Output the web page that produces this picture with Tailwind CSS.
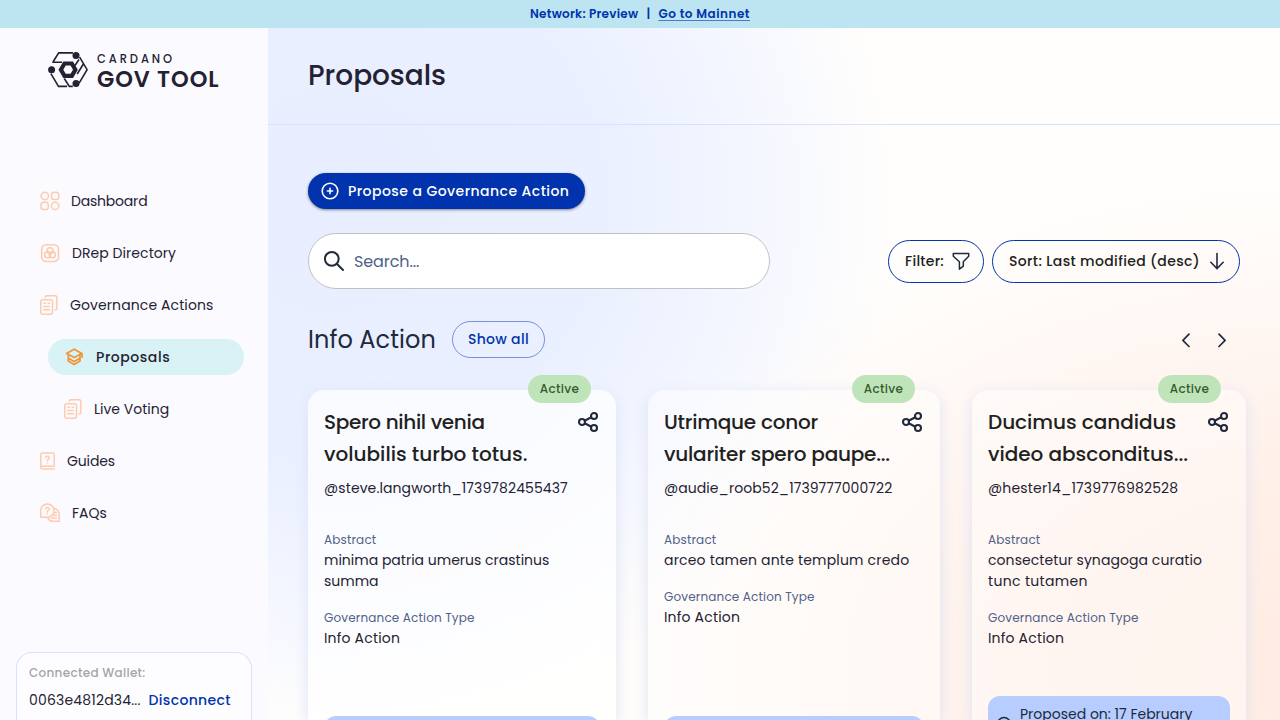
<!DOCTYPE html>
<html lang="en">
<head>
<meta charset="utf-8">
<title>Cardano GovTool - Proposals</title>
<script src="https://cdn.jsdelivr.net/npm/@tailwindcss/browser@4"></script>
</head>
<body class="h-[720px] w-[1280px] overflow-hidden bg-white font-[Poppins,Inter,sans-serif] text-sm text-[#242232]">
<svg class="hidden">
  <defs>
    <symbol id="docs" viewBox="0 0 18 20"><g fill="none" stroke="#ffcbad" stroke-width="1.5" stroke-linecap="round"><rect x=".8" y="4.7" width="11.700" height="14.5" rx="2"/><path d="M5.3 2.6V2.2Q5.3.8 6.800.8h8.400q1.600 0 1.600 1.600v11q0 1.500-1.600 1.500M3.800 8.300h1.600M8 8.300h1.600M3.800 11.500h5.800M3.800 14.800h5.800"/></g></symbol>
    <symbol id="share" viewBox="0 0 24 24"><g fill="none" stroke="#212a3d" stroke-width="2.100"><circle cx="18" cy="6" r="3"/><circle cx="6" cy="12" r="3"/><circle cx="18" cy="18" r="3"/><path d="M8.700 10.700l6.600-3.400M8.700 13.300l6.600 3.400"/></g></symbol>
    <symbol id="clock" viewBox="0 0 16 16"><g fill="none" stroke="#212a3d" stroke-width="1.4"><circle cx="8" cy="8" r="6.5"/><path d="M8 4v4l3 2"/></g></symbol>
  </defs>
</svg>

<div class="flex h-7 items-center justify-center bg-[#bce4f1] text-xs font-semibold text-[#0033ad]">
  <span class="tracking-[0.27px]">Network: Preview</span><span class="w-5 text-center">|</span><a class="tracking-[0.5px] underline decoration-[#0033ad]/60 underline-offset-2">Go to Mainnet</a>
</div>

<div class="flex h-[692px]">
  <aside class="flex w-[268px] shrink-0 flex-col bg-[#fbfaff]">
    <div class="flex h-[155px] gap-[9px] pt-6 pl-12">
      <svg class="h-9 w-10" viewBox="0 0 40 36" fill="none" stroke="#242232" stroke-width="1.6">
        <path d="M25 .9H10.700L5.300 9.500M4.200 10.300H14M31.600 5.200l7.500 12.500-8 13.500M2.900 21.600L10.500 34.400h8.600M16.300 26.500l5 7.900h3.500M35.700 11.500l-6.500 10.500M31 7.500l-4 6"/>
        <circle cx="28" cy="3.6" r="3.5" fill="#242232" stroke="none"/><circle cx="3.6" cy="17.7" r="3.5" fill="#242232" stroke="none"/><circle cx="28" cy="31.6" r="3.5" fill="#242232" stroke="none"/>
        <path d="M16.500 11.500h7.300l3.600 6.200-3.600 6.200h-7.300l-3.600-6.200z" fill="#fbfaff" stroke-width="4.200"/>
      </svg>
      <div class="flex flex-col">
        <span class="mt-px self-start text-[11.5px]/[13px] font-medium tracking-[2.9px]">CARDANO</span>
        <span class="mt-px self-start text-[22.5px]/[24px] font-semibold tracking-[0.95px]">GOV TOOL</span>
      </div>
    </div>
    <nav class="flex flex-col gap-4 pl-10">
      <a class="flex h-9 items-center gap-[11px]">
        <svg class="size-5" viewBox="0 0 20 20" fill="none" stroke="#ffcbad" stroke-width="1.5"><circle cx="4.800" cy="5" r="3.700"/><rect x="11.500" y="1.300" width="7.200" height="7.200" rx="2.600"/><rect x="1.100" y="11.300" width="7.200" height="7.200" rx="2.600"/><circle cx="15.100" cy="14.900" r="3.700"/></svg>
        <span class="tracking-[-0.2px]">Dashboard</span></a>
      <a class="flex h-9 items-center gap-3">
        <svg class="size-5" viewBox="0 0 20 20" fill="none" stroke="#ffcbad" stroke-width="1.6"><rect x="1.7" y="1.7" width="16.8" height="16.8" rx="4.5"/><circle cx="10" cy="7.8" r="3"/><circle cx="7.6" cy="11.7" r="3"/><circle cx="12.4" cy="11.7" r="3"/></svg>
        <span class="tracking-[0.06px]">DRep Directory</span></a>
      <a class="flex h-9 items-center gap-3"><svg class="h-5 w-[18px]"><use href="#docs"/></svg><span class="tracking-[0.1px]">Governance Actions</span></a>
      <a class="ml-2 flex h-9 w-[196px] items-center gap-3 rounded-full bg-[#d8f2f6] pl-4 font-medium">
        <svg class="h-5 w-5" viewBox="0 0 20 20" fill="none" stroke="#ee9636" stroke-width="1.7" stroke-linejoin="round"><path d="M10.2 2.2L2.5 6.4l7.7 4.2 7.7-4.2zM18 6.5v4.3M4.3 8v3.2l5.9 3.3 5.8-3.3V8M4.3 11v3l5.9 3.5 5.8-3.5v-3"/></svg>
        <span class="tracking-[0.55px]">Proposals</span></a>
      <a class="ml-6 flex h-9 items-center gap-3"><svg class="h-5 w-[18px]"><use href="#docs"/></svg><span>Live Voting</span></a>
      <a class="flex h-9 items-center gap-3">
        <svg class="h-[18px] w-[15px]" viewBox="0 0 15 18" fill="none" stroke="#ffcbad" stroke-width="1.500" stroke-linecap="round"><path d="M14.200 14V2.200Q14.200.9 12.900.9H2.400Q.8.9.8 2.400v12.400q0 2.200 1.800 2.200h11.600M.9 14.200h13.300"/><path d="M5.700 5.700q0-1.500 1.800-1.500t1.800 1.500c0 1.300-1.800 1.200-1.800 3M7.500 10.900v.1"/></svg>
        <span class="tracking-[-0.12px]">Guides</span></a>
      <a class="flex h-9 items-center gap-3">
        <svg class="size-5" viewBox="0 0 20 20" fill="none" stroke="#ffcbad" stroke-width="1.5" stroke-linecap="round"><path d="M.8 14.2V7.800a6.600 6.600 0 1 1 6.600 6.400zM5.600 6q0-1.500 1.800-1.500T9.200 6c0 1.300-1.800 1.200-1.800 2.900M7.400 11v.1M14.200 5.600a6.500 6.500 0 0 1 5 6.400V18.300h-6.300q-3.400 0-5-3.200M14.800 9.500h1.500M13.400 12.200h3M11.400 14.900h5"/></svg>
        <span>FAQs</span></a>
    </nav>
    <div class="mt-auto ml-4 flex h-[68px] w-[236px] flex-col rounded-t-2xl border border-b-0 border-[#d6e2ff] bg-white/60 pt-[11px] pl-3">
      <span class="self-start text-xs/[18px] font-medium tracking-[0.3px] text-[#a5a5a8]">Connected Wallet:</span>
      <div class="mt-2 flex h-5 items-center gap-2"><span class="tracking-[0.18px]">0063e4812d34...</span><span class="font-medium tracking-[0.32px] text-[#0033ad]">Disconnect</span></div>
    </div>
  </aside>

  <main class="flex w-[1012px] shrink-0 flex-col bg-[radial-gradient(ellipse_740px_490px_at_1060px_640px,#ffece2_0%,#ffefe7_35%,#fff5f0_62%,#fffaf600_100%),radial-gradient(ellipse_570px_540px_at_60px_170px,#e8eeff_0%,#eaf0ff_50%,#f5f7ff_76%,#fffefd00_100%)] bg-[#fffefc]">
    <header class="flex h-[97px] shrink-0 items-center border-b border-[#d6e2ff] pl-10 text-[28px] font-medium"><h1 class="tracking-[-0.05px]">Proposals</h1></header>
    <div class="flex flex-col px-10">
      <button class="mt-12 flex h-9 w-[277px] items-center gap-2 rounded-full bg-[#0033ad] pl-3 font-medium whitespace-nowrap text-white shadow-[0_1px_3px_rgba(0,0,0,.45)]">
        <svg class="size-5 shrink-0" viewBox="0 0 20 20" fill="none" stroke="#fff" stroke-width="1.6" stroke-linecap="round"><circle cx="10" cy="10" r="7.8"/><path d="M10 7.4v5.2M7.4 10h5.2"/></svg>
        <span class="tracking-[0.45px]">Propose a Governance Action</span>
      </button>
      <div class="mt-6 flex h-14 items-center">
        <div class="flex h-14 w-[462px] items-center gap-2 rounded-full border border-[#c1c1c1] bg-white pl-[13px] text-base text-[#506288]">
          <svg class="size-6" viewBox="0 0 24 24" fill="none" stroke="#212a3d" stroke-width="2" stroke-linecap="round"><circle cx="9.800" cy="9.800" r="6.900"/><path d="M15 15l6 6"/></svg>
          <span class="mt-px tracking-[-0.1px]">Search...</span>
        </div>
        <div class="ml-auto flex gap-2 font-medium whitespace-nowrap text-[#212121]">
          <button class="flex h-[43px] w-24 items-center gap-2 rounded-[22px] border border-[#0033ad] pl-4"><span class="tracking-[0.25px]">Filter:</span>
            <svg class="size-[18px] shrink-0" viewBox="0 0 18 18" fill="none" stroke="#212a3d" stroke-width="1.5" stroke-linejoin="round"><path d="M1.300 1.500h15.400v2.800l-5.400 5.400v4.500l-3.900 2.900V9.700L1.300 4.300z"/></svg></button>
          <button class="flex h-[43px] w-[248px] items-center gap-2 rounded-[22px] border border-[#0033ad] pl-4"><span class="tracking-[0.36px]">Sort: Last modified (desc)</span>
            <svg class="size-[18px] shrink-0" viewBox="0 0 18 18" fill="none" stroke="#212a3d" stroke-width="1.600" stroke-linecap="round"><path d="M9 1.500v15M2.800 10.300L9 16.500l6.200-6.200"/></svg></button>
        </div>
      </div>
      <div class="mt-8 flex h-[37px] items-center">
        <h2 class="mt-px text-2xl tracking-[0.08px] text-[#212a3d]">Info Action</h2>
        <button class="ml-4 flex h-[37px] w-[93px] items-center justify-center rounded-full border border-[#0033ad]/50 pb-px font-medium text-[#0033ad]"><span class="tracking-[0.3px]">Show all</span></button>
        <div class="mr-[14px] ml-auto flex gap-7">
          <svg class="h-4 w-2" viewBox="0 0 8 16" fill="none" stroke="#212a3d" stroke-width="1.700" stroke-linecap="round" stroke-linejoin="round"><path d="M7 2.100L.9 8.300 7 14.500"/></svg>
          <svg class="h-4 w-2" viewBox="0 0 8 16" fill="none" stroke="#212a3d" stroke-width="1.700" stroke-linecap="round" stroke-linejoin="round"><path d="M1 2.100l6.100 6.200L1 14.500"/></svg>
        </div>
      </div>
      <div class="mt-8 flex w-[938px] justify-start gap-8">
        <article class="relative flex h-[330px] w-[308px] shrink-0 flex-col rounded-t-2xl bg-white/70 px-4 pt-4 shadow-[0_4px_15px_0_#dde3f5]">
          <span class="absolute -top-[15px] right-[25px] flex h-7 w-[63px] items-center justify-center rounded-full bg-[#c0e4ba] text-xs font-medium tracking-[0.3px] text-[#365c2c]">Active</span>
          <div class="flex justify-between whitespace-nowrap"><h3 class="text-xl/8 font-medium text-[#212121]"><span class="tracking-[-0.33px]">Spero nihil venia</span><br>volubilis turbo totus.</h3><svg class="mt-1 size-6 shrink-0"><use href="#share"/></svg></div>
          <p class="mt-2 mb-[31px] h-[21px] leading-[21px] tracking-[0.1px]">@steve.langworth_1739782455437</p>
          <p class="h-5 text-xs/5 tracking-[0.16px] text-[#506288]">Abstract</p>
          <p class="leading-[21px] whitespace-nowrap">minima patria umerus crastinus<br>summa</p>
          <p class="mt-4 h-5 text-xs/5 tracking-[0.16px] text-[#506288]">Governance Action Type</p>
          <p class="leading-[21px] tracking-[0.18px]">Info Action</p>
          <div class="mt-auto h-1 shrink-0 overflow-hidden"><div class="h-9 rounded-xl bg-[#b8cdff]"></div></div>
        </article>
        <article class="relative flex h-[330px] w-[292px] shrink-0 flex-col rounded-t-2xl bg-white/40 px-4 pt-4 shadow-[0_4px_15px_0_#dde3f5]">
          <span class="absolute -top-[15px] right-[25px] flex h-7 w-[63px] items-center justify-center rounded-full bg-[#c0e4ba] text-xs font-medium tracking-[0.3px] text-[#365c2c]">Active</span>
          <div class="flex justify-between whitespace-nowrap"><h3 class="text-xl/8 font-medium tracking-[-0.24px] text-[#212121]">Utrimque conor<br>vulariter spero paupe...</h3><svg class="mt-1 size-6 shrink-0"><use href="#share"/></svg></div>
          <p class="mt-2 mb-[31px] h-[21px] leading-[21px] tracking-[0.07px]">@audie_roob52_1739777000722</p>
          <p class="h-5 text-xs/5 tracking-[0.16px] text-[#506288]">Abstract</p>
          <p class="leading-[21px] tracking-[0.18px] whitespace-nowrap">arceo tamen ante templum credo</p>
          <p class="mt-4 h-5 text-xs/5 tracking-[0.16px] text-[#506288]">Governance Action Type</p>
          <p class="leading-[21px] tracking-[0.18px]">Info Action</p>
          <div class="mt-auto h-1 shrink-0 overflow-hidden"><div class="h-9 rounded-xl bg-[#b8cdff]"></div></div>
        </article>
        <article class="relative flex h-[330px] w-[274px] shrink-0 flex-col rounded-t-2xl bg-white/40 px-4 pt-4 shadow-[0_4px_15px_0_#dde3f5]">
          <span class="absolute -top-[15px] right-[25px] flex h-7 w-[63px] items-center justify-center rounded-full bg-[#c0e4ba] text-xs font-medium tracking-[0.3px] text-[#365c2c]">Active</span>
          <div class="flex justify-between whitespace-nowrap"><h3 class="text-xl/8 font-medium tracking-[-0.03px] text-[#212121]">Ducimus candidus<br>video absconditus...</h3><svg class="mt-1 size-6 shrink-0"><use href="#share"/></svg></div>
          <p class="mt-2 mb-[31px] h-[21px] leading-[21px] tracking-[0.17px]">@hester14_1739776982528</p>
          <p class="h-5 text-xs/5 tracking-[0.16px] text-[#506288]">Abstract</p>
          <p class="leading-[21px] whitespace-nowrap"><span class="tracking-[0.07px]">consectetur synagoga curatio</span><br><span class="tracking-[0.33px]">tunc tutamen</span></p>
          <p class="mt-4 h-5 text-xs/5 tracking-[0.16px] text-[#506288]">Governance Action Type</p>
          <p class="leading-[21px] tracking-[0.18px]">Info Action</p>
          <div class="mt-auto flex h-6 shrink-0 gap-2 overflow-hidden rounded-t-xl bg-[#b8cdff] px-2 pt-2 text-[#212a3d]"><svg class="mt-3 size-4 shrink-0"><use href="#clock"/></svg><span class="h-5 leading-5">Proposed on: 17 February</span></div>
        </article>
      </div>
    </div>
  </main>
</div>
</body>
</html>
